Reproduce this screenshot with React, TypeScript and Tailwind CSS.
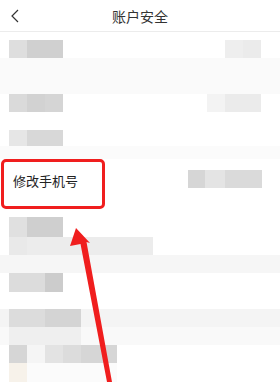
import React from 'react';

type Cell = { w: number; c: string };

const Cells = ({ cells }: { cells: Cell[] }) => (
    <div className="flex h-full">
        {cells.map((cell, i) => (
            <div key={i} className="h-full" style={{ width: cell.w, background: cell.c }} />
        ))}
    </div>
);

export default function App() {
    return (
        <div
            className="relative w-[280px] h-[382px] overflow-hidden bg-white"
            style={{ fontFamily: '"Noto Sans CJK SC", "Noto Sans", sans-serif' }}
        >
            {/* Header */}
            <header className="h-[32px] flex items-center justify-center relative border-b border-[#ececec]">
                <svg className="absolute left-[9px] top-[8px]" width="12" height="16" viewBox="0 0 12 16">
                    <path d="M9 2 L3 8 L9 14" fill="none" stroke="#333" strokeWidth="1.2" />
                </svg>
                <h1 className="text-[14px] text-[#333] leading-none">账户安全</h1>
            </header>

            {/* blurred rows */}
            <div className="h-[8px]" />
            <div className="h-[18px] flex justify-between pl-[9px] pr-[19px]">
                <Cells cells={[{ w: 18, c: '#dedede' }, { w: 36, c: '#d0d0d0' }]} />
                <Cells cells={[{ w: 18, c: '#eeeeee' }, { w: 18, c: '#ebebeb' }]} />
            </div>
            <div className="h-[36px] bg-[#fafafa]" />
            <div className="h-[18px] flex justify-between pl-[9px] pr-[19px]">
                <Cells cells={[{ w: 18, c: '#dadada' }, { w: 18, c: '#d2d2d2' }, { w: 18, c: '#d5d5d5' }]} />
                <Cells cells={[{ w: 18, c: '#f3f3f3' }, { w: 36, c: '#ebebeb' }]} />
            </div>
            <div className="h-[18px]" />
            <div className="h-[16px] flex pl-[9px]">
                <Cells cells={[{ w: 18, c: '#e6e6e6' }, { w: 36, c: '#d8d8d8' }]} />
            </div>
            <div className="h-[13px] bg-[#fbfbfb]" />

            {/* highlighted row */}
            <div className="relative h-[50px] flex items-center justify-between pl-[13px] pr-[18px]">
                <span className="text-[13px] text-[#222] leading-none -mt-[8px]">修改手机号</span>
                <div className="h-[18px] -mt-[11px]">
                    <Cells cells={[{ w: 17, c: '#d6d6d6' }, { w: 20, c: '#e4e4e4' }, { w: 37, c: '#dadada' }]} />
                </div>
                <div className="absolute left-[1px] top-0 w-[104px] h-[50px] border-[3px] border-[#f01e1e] rounded-[5px]" />
            </div>

            <div className="h-[8px]" />
            <div className="h-[20px] flex pl-[9px]">
                <Cells cells={[{ w: 18, c: '#e0e0e0' }, { w: 36, c: '#cfcfcf' }]} />
            </div>
            <div className="h-[18px] flex pl-[9px]">
                <Cells cells={[{ w: 18, c: '#e9e9e9' }, { w: 126, c: '#ececec' }]} />
            </div>
            <div className="h-[18px] bg-[#f6f6f6]" />
            <div className="h-[19px] flex pl-[9px]">
                <Cells cells={[{ w: 36, c: '#dcdcdc' }, { w: 18, c: '#cccccc' }]} />
            </div>
            <div className="h-[17px]" />
            <div className="h-[18px] flex pl-[9px] bg-[#f4f4f4]">
                <Cells cells={[{ w: 36, c: '#dcdcdc' }, { w: 36, c: '#d4d4d4' }]} />
            </div>
            <div className="h-[18px] flex pl-[9px] bg-[#f9f9f9]">
                <Cells cells={[{ w: 72, c: '#efefef' }]} />
            </div>
            <div className="h-[18px] flex pl-[9px]">
                <Cells
                    cells={[
                        { w: 18, c: '#d6d6d6' },
                        { w: 18, c: '#f5f5f5' },
                        { w: 18, c: '#e3e3e3' },
                        { w: 18, c: '#dcdcdc' },
                        { w: 36, c: '#d6d6d6' },
                    ]}
                />
            </div>
            <div className="h-[19px] flex pl-[9px]">
                <Cells cells={[{ w: 18, c: '#f7f2ea' }, { w: 90, c: '#fbfbfb' }]} />
            </div>

            {/* annotation arrow */}
            <svg className="absolute left-0 top-0" width="280" height="382" viewBox="0 0 280 382">
                <polygon
                    points="76,228 90,243 86.5,242 112,382 107,382 80.5,244 70,246"
                    fill="#f01e1e"
                />
            </svg>
        </div>
    );
}
